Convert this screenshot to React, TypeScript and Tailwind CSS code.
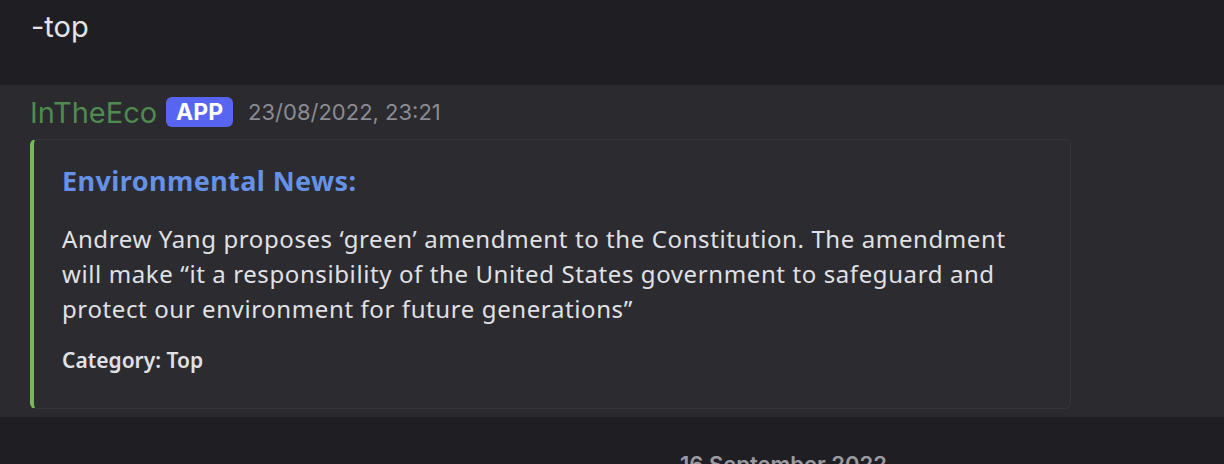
export default function App() {
  return (
    <div className="w-[1224px] h-[464px] overflow-hidden bg-[#1f1f23] font-['Inter',sans-serif]">
      {/* previous message */}
      <div className="h-[85px] pl-[31px] pt-[8px]">
        <p className="text-[29px] leading-[38px] text-[#e4e4e7]">-top</p>
      </div>

      {/* bot message (hovered) */}
      <div className="h-[332px] bg-[#2a2a2f] pl-[30px] pt-[10px]">
        <div className="flex items-center h-[34px]">
          <span className="text-[29px] text-[#4f8a4f] leading-none">InTheEco</span>
          <span className="ml-[9px] h-[30px] px-[10px] rounded-[6px] bg-[#5865f2] text-white font-bold text-[23px] flex items-center">
            APP
          </span>
          <span className="ml-[15px] text-[22px] text-[#8b8b91]">23/08/2022, 23:21</span>
        </div>

        <div className="mt-[10px] w-[1041px] h-[270px] rounded-[6px] border border-[#36363c] border-l-[4px] border-l-[#7ab85c] bg-[#2b2b30] pl-[28px] pt-[23px] font-['Noto_Sans',sans-serif]">
          <h2 className="text-[27px] leading-[36px] font-bold tracking-[0.4px] text-[#6592e6]">Environmental News:</h2>
          <p className="mt-[22px] pr-[30px] text-[24px] leading-[35px] tracking-[0.6px] text-[#e0e1e4]">
            Andrew Yang proposes ‘green’ amendment to the Constitution. The amendment will make “it a
            responsibility of the United States government to safeguard and protect our environment for
            future generations”
          </p>
          <p className="mt-[20px] text-[21px] leading-[28px] font-semibold text-[#e0e1e4]">Category: Top</p>
        </div>
      </div>

      {/* date divider */}
      <div className="pl-[680px] pt-[31px]">
        <span className="text-[22px] font-semibold text-[#9a9aa0]">16 September 2022</span>
      </div>
    </div>
  );
}
